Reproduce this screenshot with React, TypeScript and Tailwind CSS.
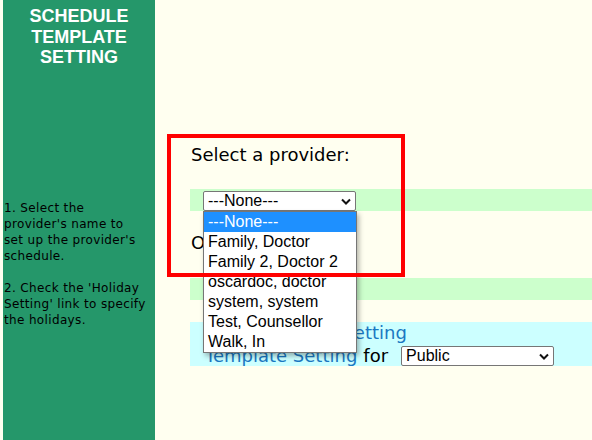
import React from "react";

const providers = [
  "---None---",
  "Family, Doctor",
  "Family 2, Doctor 2",
  "oscardoc, doctor",
  "system, system",
  "Test, Counsellor",
  "Walk, In",
];

function Chevron() {
  return (
    <svg width="10" height="7" viewBox="0 0 10 7" className="shrink-0">
      <path d="M1 1.5 L5 5.5 L9 1.5" fill="none" stroke="#111" strokeWidth="2" />
    </svg>
  );
}

function FakeSelect({ value, className }: { value: string; className: string }) {
  return (
    <div
      className={`flex h-[20px] items-center justify-between rounded-[2px] border border-[#767676] bg-white pl-[4px] pr-[4px] font-['Liberation_Sans',Arial,sans-serif] text-[16px] leading-none text-black ${className}`}
    >
      <span>{value}</span>
      <Chevron />
    </div>
  );
}

export default function App() {
  return (
    <div className="relative flex h-[440px] w-[592px] overflow-hidden bg-[#fffff0] pl-[3px]">
      {/* left help column */}
      <aside className="w-[152px] shrink-0 bg-[#25976a]">
        <h1 className="pt-[6px] text-center font-['Liberation_Sans',Arial,sans-serif] text-[18px] font-bold leading-[20.5px] text-white">
          SCHEDULE
          <br />
          TEMPLATE
          <br />
          SETTING
        </h1>
        <div className="mt-[132px] whitespace-nowrap pl-[1px] font-['DejaVu_Sans',Verdana,sans-serif] text-[12px] leading-[16px] tracking-[0.35px] text-black">
          <p>
            1. Select the
            <br />
            provider's name to
            <br />
            set up the provider's
            <br />
            schedule.
          </p>
          <p className="mt-[16px]">
            2. Check the 'Holiday
            <br />
            Setting' link to specify
            <br />
            the holidays.
          </p>
        </div>
      </aside>

      {/* main form */}
      <main className="flex-1 pl-[35px] pt-[144px] font-['DejaVu_Sans',Verdana,sans-serif] text-[18px] text-black">
        <p className="pl-[1px] leading-[21px]">Select a provider:</p>

        <div className="mt-[24px] h-[22px] bg-[#ccffcc] pl-[13px] pt-[2px]">
          <FakeSelect value="---None---" className="w-[153px]" />
        </div>

        <p className="mt-[21px] pl-[1px] leading-[21px]">Or</p>

        <div className="mt-[25px] h-[22px] bg-[#ccffcc]" />

        <div className="mt-[22px] h-[44px] bg-[#ccffff] pl-[15px]">
          <p className="pl-[64px] leading-[21px] text-[#1a78c2]">Holiday Setting</p>
          <div className="flex h-[23px] items-end">
            <span className="leading-[21px] text-[#1a78c2]">Template Setting</span>
            <span className="ml-[6px] leading-[21px]">for</span>
            <FakeSelect value="Public" className="ml-[13px] w-[153px]" />
          </div>
        </div>
      </main>

      {/* open dropdown list */}
      <ul className="absolute left-[203px] top-[211px] w-[154px] border border-[#767676] bg-white font-['Liberation_Sans',Arial,sans-serif] text-[16px] text-black shadow-[2px_3px_5px_rgba(0,0,0,0.3)]">
        {providers.map((p, i) => (
          <li
            key={p}
            className={`h-[20px] pl-[4px] leading-[20px] ${i === 0 ? "bg-[#1e90ff] text-white" : ""}`}
          >
            {p}
          </li>
        ))}
      </ul>

      {/* annotation box */}
      <div className="pointer-events-none absolute left-[167px] top-[134px] h-[143px] w-[238px] border-4 border-[#ff0000]" />
    </div>
  );
}
